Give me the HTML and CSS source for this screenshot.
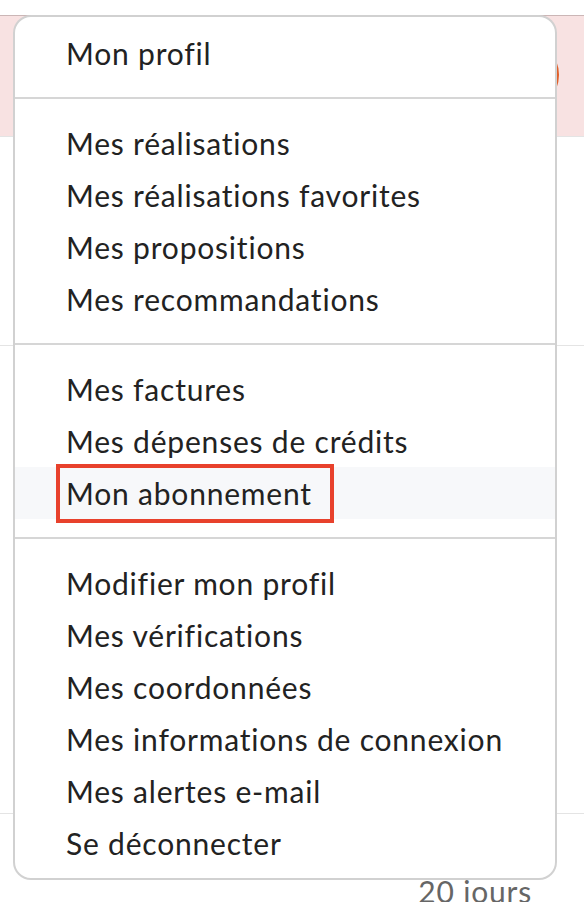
FILE: index.html
```html
<!DOCTYPE html>
<html lang="fr">
<head>
  <meta charset="UTF-8">
  <meta name="viewport" content="width=device-width, initial-scale=1.0">
  <title>Menu compte</title>
  <link rel="stylesheet" href="styles.css">
</head>
<body>
  <!-- Page behind the dropdown -->
  <div class="page">
    <div class="banner">
      <span class="avatar"></span>
    </div>
    <div class="row row-tall"></div>
    <div class="row row-long"></div>
    <div class="footer-row">
      <span class="delay">20 jours</span>
    </div>
  </div>

  <!-- Account dropdown -->
  <nav class="account-menu">
    <ul class="menu-section">
      <li><a href="#">Mon profil</a></li>
    </ul>
    <ul class="menu-section">
      <li><a href="#">Mes réalisations</a></li>
      <li><a href="#">Mes réalisations favorites</a></li>
      <li><a href="#">Mes propositions</a></li>
      <li><a href="#">Mes recommandations</a></li>
    </ul>
    <ul class="menu-section">
      <li><a href="#">Mes factures</a></li>
      <li><a href="#">Mes dépenses de crédits</a></li>
      <li class="active"><a href="#"><span class="marked">Mon abonnement</span></a></li>
    </ul>
    <ul class="menu-section">
      <li><a href="#">Modifier mon profil</a></li>
      <li><a href="#">Mes vérifications</a></li>
      <li><a href="#">Mes coordonnées</a></li>
      <li><a href="#">Mes informations de connexion</a></li>
      <li><a href="#">Mes alertes e-mail</a></li>
      <li><a href="#">Se déconnecter</a></li>
    </ul>
  </nav>
</body>
</html>
```

FILE: styles.css
```css
body {
  margin: 0;
  padding: 0;
  font-family: Lato, "Noto Sans", sans-serif;
  background-color: #fff;
  color: #222;
}
.page {
  position: relative;
  height: 902px;
  overflow: hidden;
}
.banner {
  position: relative;
  margin-top: 15px;
  height: 120px;
  background-color: #f8e2e2;
  border-top: 1px solid #cbb6b6;
}
.avatar {
  position: absolute;
  left: 485px;
  top: 22px;
  width: 74px;
  height: 74px;
  border-radius: 50%;
  background-color: #e0602a;
}
.row {
  border-bottom: 1px solid #e4e4e4;
}
.row-tall {
  height: 208px;
  border-top: 1px solid #e4e4e4;
}
.row-long {
  height: 467px;
}
.footer-row {
  display: flex;
  justify-content: flex-end;
  padding: 62px 52px 0 0;
}
.delay {
  font-size: 30px;
  letter-spacing: 0.8px;
  color: #666;
  line-height: 1;
}

.account-menu {
  position: absolute;
  left: 13px;
  top: 15px;
  width: 540px;
  padding: 10px 0 9px;
  background-color: #fff;
  border: 2px solid rgba(0, 0, 0, 0.18);
  border-radius: 18px;
}
.menu-section {
  list-style: none;
  margin: 0;
  padding: 18px 0;
  border-top: 2px solid #d6d6d6;
}
.menu-section:first-child {
  padding-top: 0;
  border-top: none;
}
.menu-section:last-child {
  padding-bottom: 0;
}
.menu-section li a {
  display: flex;
  align-items: center;
  height: 52px;
  padding-left: 51px;
  font-size: 30px;
  line-height: 36px;
  letter-spacing: 0.8px;
  color: #222;
  text-decoration: none;
}
.menu-section li.active a {
  background-color: #f7f8fa;
}
.marked {
  position: relative;
}
.marked::after {
  content: "";
  position: absolute;
  left: -10px;
  right: -22px;
  top: -11px;
  bottom: -12px;
  border: 4px solid #e8412c;
}
```
